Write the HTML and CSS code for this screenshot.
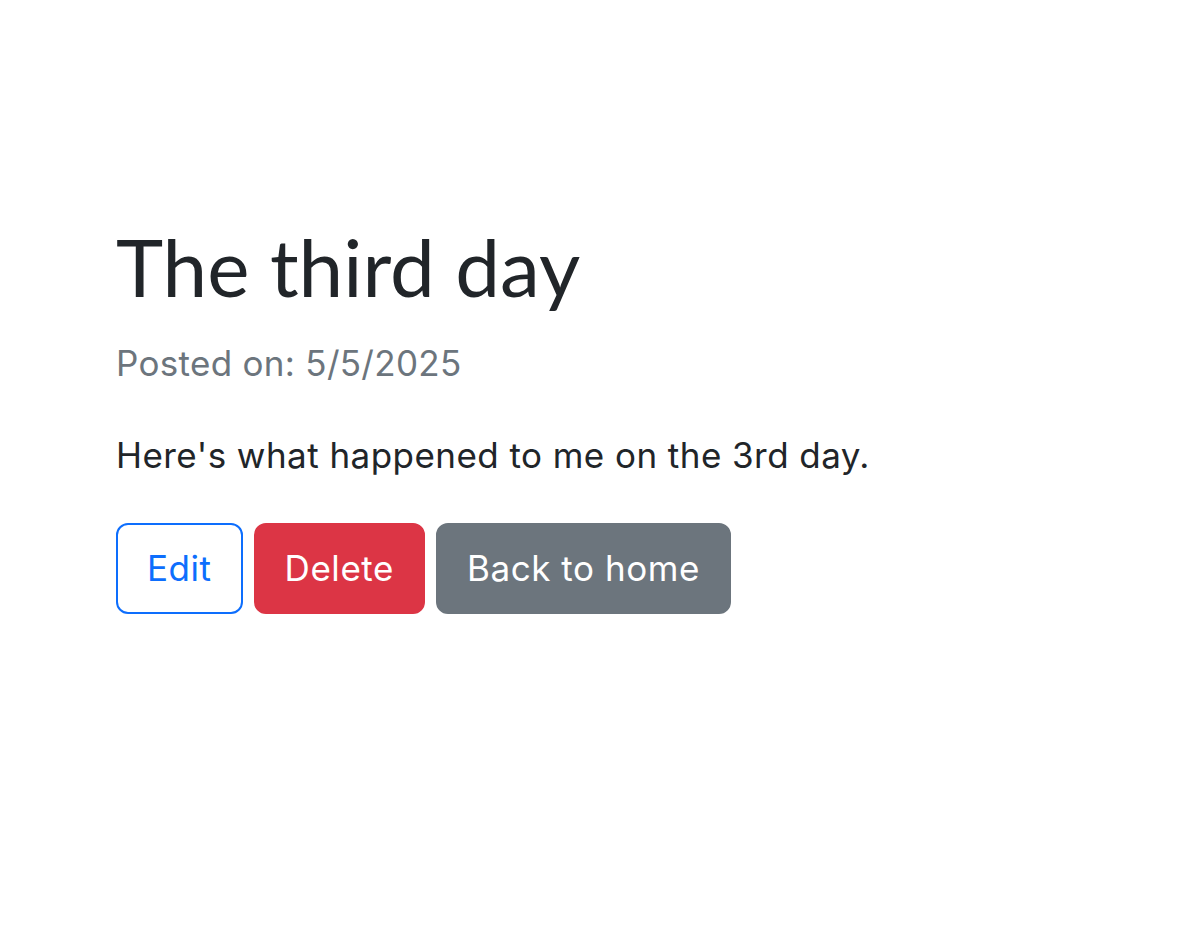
FILE: index.html
```html
<!DOCTYPE html>
<html lang="en">

<head>
    <meta charset="UTF-8">
    <meta name="viewport" content="width=device-width, initial-scale=1.0">
    <title>The third day</title>
    <link rel="stylesheet" href="styles.css">
</head>

<body>
    <div class="container">
        <h1 class="post-title">The third day</h1>
        <p class="post-date">Posted on: 5/5/2025</p>
        <p class="post-body">Here's what happened to me on the 3rd day.</p>

        <div class="actions">
            <a href="#" class="btn btn-outline-primary">Edit</a>
            <button type="button" class="btn btn-danger">Delete</button>
            <a href="#" class="btn btn-secondary">Back to home</a>
        </div>
    </div>
</body>

</html>
```

FILE: styles.css
```css
* {
    margin: 0;
    padding: 0;
    box-sizing: border-box;
}

body {
    background-color: #fff;
    color: #212529;
    font-family: Inter, 'Liberation Sans', Arial, sans-serif;
    font-size: 35px;
    line-height: 52px;
    letter-spacing: 0.3px;
}

.container {
    padding: 218px 116px 0;
}

.post-title {
    font-family: Lato, 'Noto Sans', sans-serif;
    font-weight: 400;
    font-size: 80px;
    line-height: 96px;
    letter-spacing: 0;
    margin-bottom: 23px;
}

.post-date {
    color: #6c757d;
    margin-bottom: 40px;
}

.post-body {
    letter-spacing: 0.45px;
    margin-bottom: 42px;
}

.actions {
    display: flex;
    gap: 11px;
}

.btn {
    display: inline-flex;
    align-items: center;
    justify-content: center;
    height: 91px;
    padding: 0 29px;
    border: 2px solid transparent;
    border-radius: 12px;
    font-family: inherit;
    font-size: 35px;
    letter-spacing: 0.55px;
    line-height: 1;
    text-decoration: none;
    cursor: pointer;
}

.btn-outline-primary {
    color: #0d6efd;
    border-color: #0d6efd;
    background: #fff;
}

.btn-danger {
    color: #fff;
    background-color: #dc3545;
    border-color: #dc3545;
}

.btn-secondary {
    color: #fff;
    background-color: #6c757d;
    border-color: #6c757d;
}
```
